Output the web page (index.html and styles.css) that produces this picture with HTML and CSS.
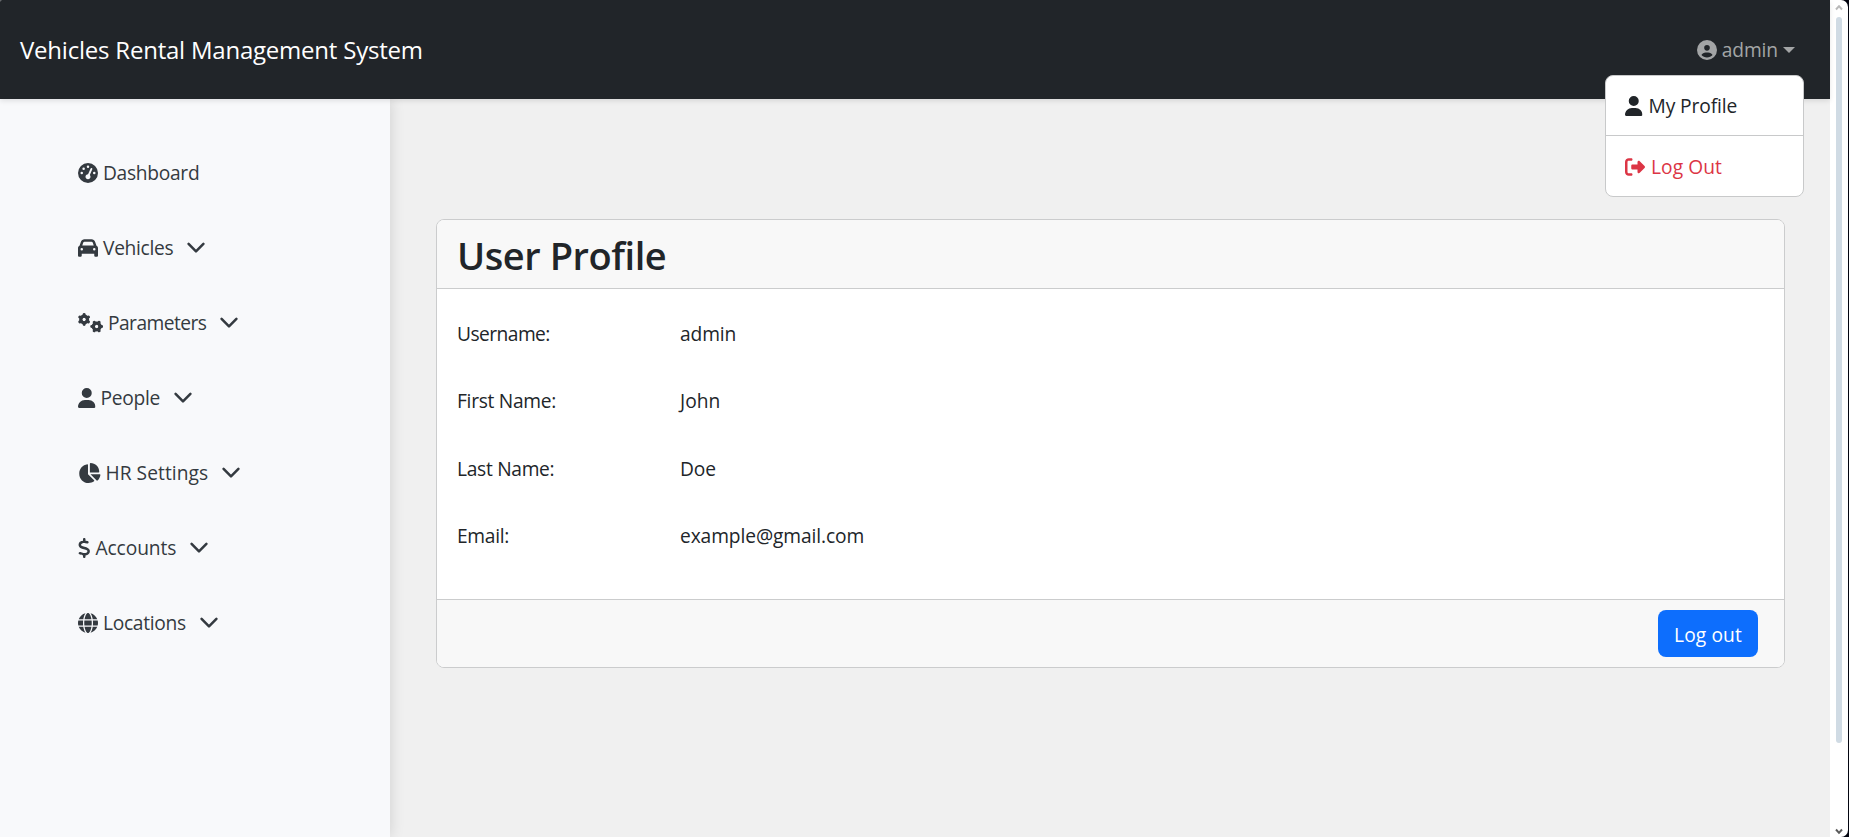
FILE: index.html
```
<!DOCTYPE html>
<html lang="en">
<head>
<meta charset="utf-8">
<title>User Profile</title>
<link rel="stylesheet" href="styles.css">
</head>
<body>
<svg class="defs" aria-hidden="true">
  <symbol id="user" viewBox="0 0 448 512"><path d="M224 256A128 128 0 1 0 224 0a128 128 0 1 0 0 256zm-45.7 48C79.8 304 0 383.8 0 482.3C0 498.7 13.3 512 29.7 512H418.3c16.4 0 29.7-13.3 29.7-29.7C448 383.8 368.2 304 269.7 304H178.3z"/></symbol>
  <symbol id="chevron" viewBox="0 0 18 12"><path d="M1.6 1.8L9 9.4L16.4 1.8" fill="none" stroke="currentColor" stroke-width="2.5" stroke-linecap="round" stroke-linejoin="round"/></symbol>
</svg>
<div class="window">
  <div class="page">
    <header class="navbar">
      <a class="brand">Vehicles Rental Management System</a>
      <div class="account">
        <a class="toggle">
          <svg class="ico" width="20" height="20" viewBox="0 0 512 512"><path d="M399 384.2C376.9 345.8 335.4 320 288 320H224c-47.4 0-88.9 25.8-111 64.2c35.2 39.2 86.2 63.8 143 63.8s107.8-24.7 143-63.8zM0 256a256 256 0 1 1 512 0A256 256 0 1 1 0 256zm256 16a72 72 0 1 0 0-144 72 72 0 1 0 0 144z"/></svg>
          <span>admin</span><i class="caret"></i>
        </a>
        <div class="menu">
          <a class="menu-item"><svg class="ico" width="17.5" height="20"><use href="#user"/></svg><span>My Profile</span></a>
          <a class="menu-item danger"><svg class="ico" width="20" height="20" viewBox="0 0 512 512"><path d="M377.9 105.9L500.7 228.7c7.2 7.2 11.3 17.1 11.3 27.3s-4.1 20.1-11.3 27.3L377.9 406.1c-6.4 6.4-15 9.9-24 9.9c-18.7 0-33.9-15.2-33.9-33.9l0-62.1-128 0c-17.7 0-32-14.3-32-32l0-64c0-17.7 14.3-32 32-32l128 0 0-62.1c0-18.7 15.2-33.9 33.9-33.9c9 0 17.6 3.6 24 9.9zM160 96L96 96c-17.7 0-32 14.3-32 32l0 256c0 17.7 14.3 32 32 32l64 0c17.7 0 32 14.3 32 32s-14.3 32-32 32l-64 0c-53 0-96-43-96-96L0 128C0 75 43 32 96 32l64 0c17.7 0 32 14.3 32 32s-14.3 32-32 32z"/></svg><span class="wide">Log Out</span></a>
        </div>
      </div>
    </header>
    <div class="body">
      <nav class="sidebar">
        <a class="link"><svg class="ico" width="20" height="20" viewBox="0 0 512 512"><path fill-rule="evenodd" d="M0 256a256 256 0 1 1 512 0A256 256 0 1 1 0 256zM288 96a32 32 0 1 0 -64 0 32 32 0 1 0 64 0zM256 416c35.3 0 64-28.7 64-64c0-17.4-6.9-33.1-18.1-44.6L366 161.7c5.3-12.1-.2-26.3-12.3-31.6s-26.3 .2-31.6 12.3L257.9 288c-.6 0-1.3 0-1.9 0c-35.3 0-64 28.7-64 64s28.7 64 64 64zM176 144a32 32 0 1 0 -64 0 32 32 0 1 0 64 0zM96 288a32 32 0 1 0 0-64 32 32 0 1 0 0 64zm352-32a32 32 0 1 0 -64 0 32 32 0 1 0 64 0z"/></svg><span class="snug">Dashboard</span></a>
        <a class="link"><svg class="ico" width="20" height="20" viewBox="0 0 512 512"><path d="M135.2 117.4L109.1 192H402.9l-26.1-74.6C372.3 104.6 360.2 96 346.6 96H165.4c-13.6 0-25.7 8.6-30.2 21.4zM39.6 196.8L74.8 96.3C88.3 57.8 124.6 32 165.4 32H346.6c40.8 0 77.1 25.8 90.6 64.3l35.2 100.5c23.2 9.6 39.6 32.5 39.6 59.2V400v48c0 17.7-14.3 32-32 32H448c-17.7 0-32-14.3-32-32V400H96v48c0 17.7-14.3 32-32 32H32c-17.7 0-32-14.3-32-32V400 256c0-26.7 16.4-49.6 39.6-59.2zM128 288a32 32 0 1 0 -64 0 32 32 0 1 0 64 0zm288 32a32 32 0 1 0 0-64 32 32 0 1 0 0 64z"/></svg><span class="snug">Vehicles</span><svg class="chev"><use href="#chevron"/></svg></a>
        <a class="link"><svg class="ico" width="25" height="20" viewBox="0 0 640 512"><g fill="none" stroke="currentColor"><g id="gear"><circle cx="157" cy="165" r="86" stroke-width="84"/><path stroke-width="76" stroke-linecap="round" d="M157 84V38M157 246v46M229 124l38-21M85 124l-38-21M229 206l38 21M85 206l-38 21"/></g><use href="#gear" transform="translate(478 346) rotate(90) translate(-157 -165)"/></g></svg><span class="tight">Parameters</span><svg class="chev"><use href="#chevron"/></svg></a>
        <a class="link"><svg class="ico" width="17.5" height="20"><use href="#user"/></svg><span class="snug">People</span><svg class="chev"><use href="#chevron"/></svg></a>
        <a class="link"><svg class="ico" width="22.5" height="20" viewBox="0 0 576 512"><path d="M304 240V16.6c0-9 7-16.6 16-16.6C443.7 0 544 100.3 544 224c0 9-7.6 16-16.6 16H304zM32 272C32 150.7 122.1 50.3 239 34.3c9.2-1.3 17 6.1 17 15.4V288L412.5 444.5c6.7 6.7 6.2 17.7-1.5 23.1C371.8 495.6 323.8 512 272 512C139.5 512 32 404.6 32 272zm526.4 16c9.3 0 16.6 7.8 15.4 17c-7.7 55.9-34.6 105.6-73.9 142.3c-6 5.6-15.4 5.2-21.2-.7L320 288H558.4z"/></svg><span class="wide">HR Settings</span><svg class="chev"><use href="#chevron"/></svg></a>
        <a class="link"><svg class="ico" width="12.5" height="20" viewBox="0 0 320 512"><path d="M160 0c17.7 0 32 14.3 32 32V67.7c1.6 .2 3.1 .4 4.7 .7c.4 .1 .7 .1 1.1 .2l48 8.8c17.4 3.2 28.9 19.9 25.7 37.2s-19.9 28.9-37.2 25.7l-47.5-8.7c-31.3-4.6-58.9-1.5-78.3 6.2s-27.2 18.3-29 28.1c-2 10.7-.5 16.7 1.2 20.4c1.8 3.9 5.5 8.3 12.8 13.2c16.3 10.7 41.3 17.7 73.7 26.3l2.9 .8c28.6 7.6 63.6 16.8 89.6 33.8c14.2 9.3 27.6 21.9 35.9 39.5c8.5 17.9 10.3 37.9 6.4 59.2c-6.9 38-33.1 63.4-65.6 76.7c-13.7 5.6-28.6 9.2-44.4 11V480c0 17.7-14.3 32-32 32s-32-14.3-32-32V445.1c-.4-.1-.9-.1-1.3-.2l-.2 0 0 0c-24.4-3.8-64.5-14.3-91.5-26.3c-16.1-7.2-23.4-26.1-16.2-42.2s26.1-23.4 42.2-16.2c20.9 9.3 55.3 18.5 75.2 21.6c31.9 4.7 58.2 2 76-5.3c16.9-6.9 24.6-16.9 26.8-28.9c1.9-10.6 .4-16.7-1.3-20.4c-1.9-4-5.6-8.4-13-13.3c-16.4-10.7-41.5-17.7-74-26.3l-2.8-.7 0 0C119.4 279.3 84.4 270 58.4 253c-14.2-9.3-27.5-22-35.8-39.6c-8.4-17.9-10.1-37.9-6.1-59.2C23.7 116 52.3 91.2 84.8 78.3c13.3-5.3 27.9-8.9 43.2-11V32c0-17.7 14.3-32 32-32z"/></svg><span>Accounts</span><svg class="chev"><use href="#chevron"/></svg></a>
        <a class="link"><svg class="ico" width="20" height="20" viewBox="0 0 512 512"><path d="M352 256c0 22.2-1.2 43.6-3.3 64H163.3c-2.2-20.4-3.3-41.8-3.3-64s1.2-43.6 3.3-64H348.7c2.2 20.4 3.3 41.8 3.3 64zm28.8-64H503.9c5.3 20.5 8.1 41.9 8.1 64s-2.8 43.5-8.1 64H380.8c2.1-20.6 3.2-42 3.2-64s-1.1-43.4-3.2-64zm112.6-32H376.7c-10-63.9-29.8-117.4-55.3-151.6c78.3 20.7 142 77.5 171.9 151.6zm-149.1 0H167.7c6.1-36.4 15.5-68.6 27-94.7c10.5-23.6 22.2-40.7 33.5-51.5C239.4 3.2 248.7 0 256 0s16.6 3.2 27.8 13.8c11.3 10.8 23 27.9 33.5 51.5c11.6 26 20.9 58.2 27 94.7zm-209 0H18.6C48.6 85.9 112.2 29.1 190.6 8.4C165.1 42.6 145.3 96.1 135.3 160zM8.1 192H131.2c-2.1 20.6-3.2 42-3.2 64s1.1 43.4 3.2 64H8.1C2.8 299.5 0 278.1 0 256s2.8-43.5 8.1-64zM194.7 446.6c-11.6-26-20.9-58.2-27-94.6H344.3c-6.1 36.4-15.5 68.6-27 94.6c-10.5 23.6-22.2 40.7-33.5 51.5C272.6 508.8 263.3 512 256 512s-16.6-3.2-27.8-13.8c-11.3-10.8-23-27.9-33.5-51.5zM135.3 352c10 63.9 29.8 117.4 55.3 151.6C112.2 482.9 48.6 426.1 18.6 352H135.3zm358.1 0c-30 74.1-93.6 130.9-171.9 151.6c25.5-34.2 45.2-87.7 55.3-151.6H493.4z"/></svg><span class="snug">Locations</span><svg class="chev"><use href="#chevron"/></svg></a>
      </nav>
      <main class="main">
        <section class="card">
          <h2 class="card-header">User Profile</h2>
          <dl class="card-body">
            <dt class="tight">Username:</dt><dd>admin</dd>
            <dt class="snug">First Name:</dt><dd class="wide">John</dd>
            <dt class="snug">Last Name:</dt><dd>Doe</dd>
            <dt class="snug">Email:</dt><dd>example@gmail.com</dd>
          </dl>
          <div class="card-footer"><button class="btn">Log out</button></div>
        </section>
      </main>
    </div>
  </div>
  <div class="scrollbar">
    <svg class="arrow" viewBox="0 0 8 7"><path d="M1 5.5L4 2.2L7 5.5" fill="none" stroke="#b9b9b9" stroke-width="2"/></svg>
    <div class="thumb"></div>
    <svg class="arrow down" viewBox="0 0 8 7"><path d="M1 1.5L4 4.8L7 1.5" fill="none" stroke="#5c5c5c" stroke-width="2"/></svg>
  </div>
</div>
</body>
</html>
```
FILE: styles.css
```
* { box-sizing: border-box; }
body {
  margin: 0;
  background: #02040f;
  color: #212529;
  font: 19.2px/30px "Open Sans", "Noto Sans", sans-serif;
  letter-spacing: -0.1px;
}
.defs { position: absolute; width: 0; height: 0; }
.ico { flex: none; fill: currentColor; }
.snug { letter-spacing: -0.3px; }
.tight { letter-spacing: -0.55px; }
.wide { letter-spacing: 0.05px; }
.window {
  display: flex;
  width: 1848px;
  height: 837px;
  overflow: hidden;
  background: #fff;
  border-radius: 2px 7px 7px 0;
}
.page { width: 1830px; display: flex; flex-direction: column; background: #f0f0f0; }
.navbar {
  position: relative;
  z-index: 2;
  flex: none;
  height: 99px;
  padding: 0 35px 0 20px;
  display: flex;
  align-items: center;
  justify-content: space-between;
  background: #212529;
  box-shadow: 0 2px 5px rgba(0, 0, 0, .1);
}
.brand { color: #fff; font-size: 24px; letter-spacing: -0.22px; }
.account { position: relative; }
.toggle { display: flex; align-items: center; color: #a3a5a6; }
.toggle span { margin-left: 5px; }
.caret {
  margin-left: 5px;
  border: 6px solid transparent;
  border-top-color: currentColor;
  border-bottom: 0;
}
.menu {
  position: absolute;
  top: 40px;
  right: -9px;
  width: 199px;
  height: 122px;
  background: #fff;
  border: 1px solid #c8c9ca;
  border-radius: 8px;
}
.menu-item { display: flex; align-items: center; height: 59px; padding: 2px 0 0 19px; }
.menu-item span { margin-left: 6px; }
.menu-item + .menu-item { border-top: 1px solid #c8c9ca; height: 61px; }
.danger { color: #dc3545; }
.body { flex: 1; display: flex; }
.sidebar {
  width: 390px;
  padding: 36px 0 0 78px;
  background: #f8f9fb;
  color: #343a40;
  box-shadow: 0 0 14px rgba(0, 0, 0, .14);
}
.link { display: flex; align-items: center; height: 75px; }
.link span { margin-left: 5px; }
.chev { width: 18px; height: 12px; margin-left: 14px; }
.main { flex: 1; padding: 120px 45px 0 46px; }
.card { height: 449px; background: #fff; border: 1px solid #cbcccd; border-radius: 8px; overflow: hidden; }
.card-header {
  height: 69px;
  margin: 0;
  padding: 2px 0 0 20px;
  background: #f8f8f8;
  border-bottom: 1px solid #cbcccd;
  font-size: 38px;
  line-height: 66px;
  font-weight: 600;
  letter-spacing: -0.45px;
}
.card-body {
  display: grid;
  grid-template-columns: 223px 1fr;
  grid-auto-rows: 67.5px;
  align-items: center;
  height: 310px;
  margin: 0;
  padding: 11px 20px 0;
}
.card-body dd { margin: 0; }
.card-footer {
  display: flex;
  justify-content: flex-end;
  height: 69px;
  padding: 10px 26px 0 0;
  background: #f8f8f8;
  border-top: 1px solid #cbcccd;
}
.btn {
  width: 100px;
  height: 47px;
  padding: 2px 0 0;
  border: 0;
  border-radius: 8px;
  background: #0d6efd;
  color: #fff;
  font: inherit;
  letter-spacing: 0.1px;
}
.scrollbar { width: 18px; display: flex; flex-direction: column; align-items: center; padding: 4px 0 2px; }
.arrow { width: 8px; height: 7px; }
.thumb { width: 6px; height: 726px; margin-top: 6px; border-radius: 3px; background: #d0dbe4; }
.down { margin-top: auto; }
```
